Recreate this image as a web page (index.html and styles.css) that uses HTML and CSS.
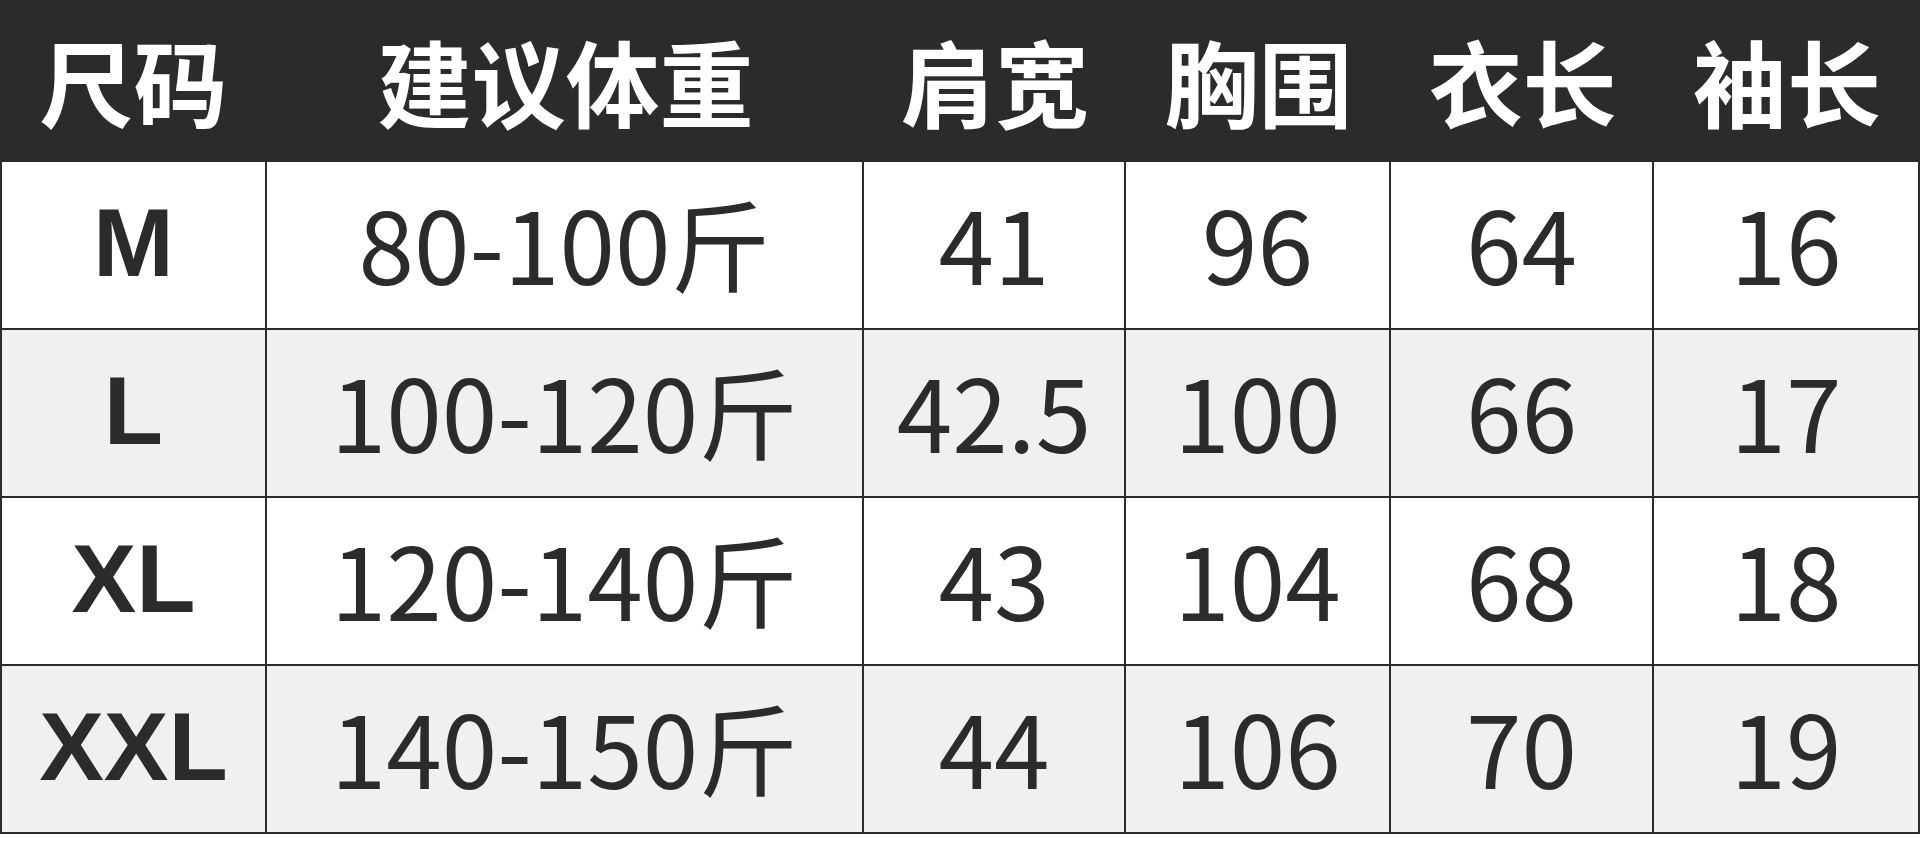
FILE: index.html
```html
<!DOCTYPE html>
<html lang="zh-CN">
<head>
<meta charset="utf-8">
<title>尺码表</title>
<link rel="stylesheet" href="styles.css">
</head>
<body>
<div class="sheet">
  <div class="head">尺码</div>
  <div class="head">建议体重</div>
  <div class="head">肩宽</div>
  <div class="head">胸围</div>
  <div class="head">衣长</div>
  <div class="head">袖长</div>

  <div class="cell size first">M</div>
  <div class="cell">80-100斤</div>
  <div class="cell">41</div>
  <div class="cell">96</div>
  <div class="cell">64</div>
  <div class="cell">16</div>

  <div class="cell size first alt">L</div>
  <div class="cell alt">100-120斤</div>
  <div class="cell alt">42.5</div>
  <div class="cell alt">100</div>
  <div class="cell alt">66</div>
  <div class="cell alt">17</div>

  <div class="cell size first">XL</div>
  <div class="cell">120-140斤</div>
  <div class="cell">43</div>
  <div class="cell">104</div>
  <div class="cell">68</div>
  <div class="cell">18</div>

  <div class="cell size first alt">XXL</div>
  <div class="cell alt">140-150斤</div>
  <div class="cell alt">44</div>
  <div class="cell alt">106</div>
  <div class="cell alt">70</div>
  <div class="cell alt">19</div>
</div>
</body>
</html>
```

FILE: styles.css
```css
* { box-sizing: border-box; }
html, body { margin: 0; padding: 0; background: #ffffff; }
body { width: 1920px; height: 868px; overflow: hidden; }

.sheet {
  display: grid;
  grid-template-columns: 267px 597px 262px 265px 263px 266px;
  grid-template-rows: 162px 168px 168px 168px 168px;
}

.head {
  background: #2b2b2b;
  color: #ffffff;
  display: flex;
  align-items: center;
  justify-content: center;
  font-family: "Noto Sans CJK SC", sans-serif;
  font-weight: 700;
  font-size: 94px;
  line-height: 1;
  padding-bottom: 2px;
}

.cell {
  background: #ffffff;
  color: #2b2b2b;
  display: flex;
  align-items: center;
  justify-content: center;
  border-right: 2px solid #2b2b2b;
  border-bottom: 2px solid #2b2b2b;
  font-family: "Noto Sans CJK SC", sans-serif;
  font-weight: 400;
  font-size: 100px;
  line-height: 1;
  padding-bottom: 7px;
}
.cell.alt { background: #f0f0f0; }
.cell.first { border-left: 2px solid #2b2b2b; }
.cell.size {
  font-family: "Liberation Sans", Arial, sans-serif;
  font-weight: 700;
  font-size: 97px;
  padding-bottom: 5px;
}
```
